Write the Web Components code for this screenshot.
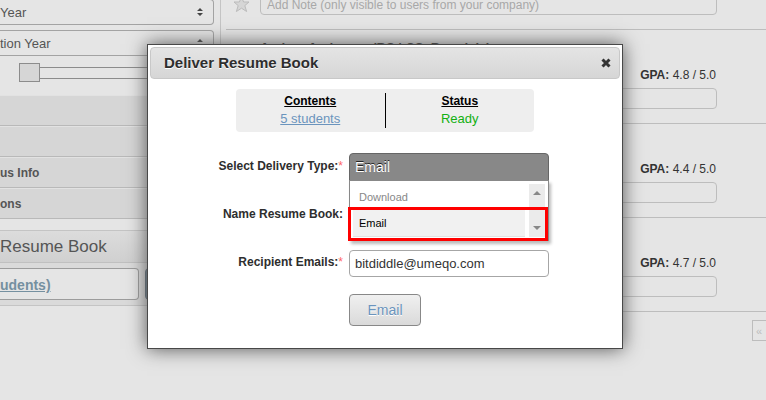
<!DOCTYPE html>
<html lang="en">
<head>
<meta charset="utf-8">
<title>Deliver Resume Book</title>
<style>
html{background:#e5e5e5}
body{margin:0;font:12px/16px "Liberation Sans",Arial,sans-serif;color:#333;overflow:hidden}
</style>
</head>
<body>
<resume-app></resume-app>
<script>
const define=(name,html)=>customElements.define(name,class extends HTMLElement{
  constructor(){
    super();
    const t=document.createElement('template');
    t.innerHTML='<style>*{box-sizing:border-box}</style>'+html;
    this.attachShadow({mode:'open'}).append(t.content.cloneNode(true));
  }
});

/* Drop-down of the filter column, running off the left side of the window */
customElements.define('filter-select',class extends HTMLElement{
  connectedCallback(){
    this.attachShadow({mode:'open'}).innerHTML=`<style>
    :host{display:grid;margin-right:6px}
    select,svg{grid-area:1/1}
    select{appearance:none;height:26px;width:100%;margin:0;padding:0;border:1px solid #a3a3a3;border-left:0;border-radius:0 4px 4px 0;background:transparent;color:#555;font:13px "Liberation Sans",Arial,sans-serif}
    svg{justify-self:end;align-self:center;margin-right:11px;pointer-events:none}
    </style><select aria-label="${this.getAttribute('label')}"><option>${this.getAttribute('value')}</option></select>
    <svg width="6" height="8" fill="#444"><path d="M0 3L3 0L6 3ZM0 5L3 8L6 5Z"/></svg>`;
  }
});

define('filter-slider',`<style>
:host{display:flex;padding:7px 5px 0 19px;height:39px}
div{display:grid;flex:1;align-self:start;align-items:center}
input,span{grid-area:1/1}
span{height:12px;border:1px solid #8c8c8c;margin-left:20px}
input{appearance:none;width:100%;height:19px;margin:0;background:none}
input::-webkit-slider-thumb{appearance:none;width:21px;height:19px;border:1px solid #8c8c8c;background:#d6d6d6}
</style><div><span></span><input type="range" value="0" aria-label="Minimum"></div>`);

define('accordion-header',`<style>
:host{display:block}
button{display:block;width:100%;height:31px;margin:0;padding:0;border:0;border-top:1px solid #e2e2e2;border-bottom:1px solid #b9b9b9;background:#d6d6d6;color:#555;text-align:left;font:bold 12px "Liberation Sans",Arial,sans-serif}
</style><button><slot></slot></button>`);

define('book-cart',`<style>
:host{display:block;margin-top:11px;border-top:1px solid #c4c4c4;border-bottom:1px solid #c4c4c4;background:#dadada}
h2{margin:0;height:32px;border-bottom:1px solid #c0c0c0;font-size:17px;line-height:31px;font-weight:normal;color:#555;background:linear-gradient(#dcdcdc,#d0d0d0)}
div{display:flex;gap:6px;padding:5px 0}
p{margin:0;width:139px;height:32px;border:1px solid #9c9c9c;border-left:0;border-radius:0 4px 4px 0;background:#e5e5e5;line-height:32px;font-size:14px;font-weight:bold}
a{color:#7590a0}
button{flex:1;border:1px solid #5f6f7c;border-radius:4px;background:#71828f}
</style><h2>Resume Book</h2><div><p><a href="#">udents)</a></p><button aria-label="Deliver"></button></div>`);

define('filter-sidebar',`<style>
:host{display:block;width:221px;border-right:1px solid #c4c4c4}
.s{display:grid;gap:5px;margin-top:-1px}
</style><div class="s"><filter-select label="Graduation year" value="Year"></filter-select>
<filter-select label="Second graduation year" value="tion Year"></filter-select></div>
<filter-slider></filter-slider>
<accordion-header></accordion-header><accordion-header></accordion-header>
<accordion-header>us Info</accordion-header><accordion-header>ons</accordion-header>
<book-cart></book-cart>`);

define('student-row',`<style>
:host{display:grid;height:94px;padding:11px 49px 0 34px;border-bottom:1px solid #bdbdbd;grid-template-rows:26px 16px 5px 21px;grid-template-columns:1fr auto}
::slotted(h3){grid-row:1;grid-column:1;margin:0;font-size:13px;line-height:13px;white-space:nowrap}
p{grid-row:2;grid-column:2;margin:0 1px 0 0}
input{grid-row:4;grid-column:1/3;width:100%;height:21px;border:1px solid #bdbdbd;border-radius:4px;background:none}
</style><slot name="name"></slot><p><b>GPA:</b> <slot></slot></p><input type="text" aria-label="Note">`);

define('student-list',`<style>
:host{display:block;flex:1;min-width:0;padding-left:5px}
.note{display:flex;align-items:flex-start;gap:10px;height:30px;padding:0 49px 0 7px;border-bottom:1px solid #bdbdbd}
svg{margin-top:-4px;width:17px;height:17px;flex:none}
input{flex:1;min-width:0;height:21px;margin-top:-6px;padding:0 6px;border:1px solid #bdbdbd;border-radius:4px;background:none;font:12px "Liberation Sans",Arial,sans-serif}
input::placeholder{color:#a8a8a8}
nav{display:flex;justify-content:flex-end;margin-top:8px;overflow:hidden}
a{width:14px;height:21px;border:1px solid #bdbdbd;border-right:0;padding-left:3px;font-size:11px;line-height:20px;color:#bdbdbd;text-decoration:none}
</style>
<div class="note"><svg viewBox="0 0 17 17"><path d="M8.5 1L10.6 6H16L11.8 9.6L13.6 15.5L8.5 12.2L3.4 15.5L5.2 9.6L1 6H6.4Z" fill="#d6d6d6" stroke="#bbb"/></svg>
<input type="text" placeholder="Add Note (only visible to users from your company)" aria-label="Add Note"></div>
<student-row><h3 slot="name">Andrea Anderson (BS | CS, Brandeis)</h3>4.8 / 5.0</student-row>
<student-row>4.4 / 5.0</student-row>
<student-row>4.7 / 5.0</student-row>
<nav><a href="#" aria-label="First">«</a></nav>`);

define('dialog-title',`<style>
:host{display:flex;align-items:center;justify-content:space-between;height:32px;padding:0 8px 0 13px;border:1px solid #c8c8c8;border-radius:4px;background:linear-gradient(#e4e4e4,#d6d6d6)}
h1{margin:0;font-size:15px;line-height:16px;color:#2e2e2e;text-shadow:0 1px #fff}
button{display:flex;border:0;background:none;padding:0}
</style><h1><slot></slot></h1><button aria-label="Close"><svg width="10" height="10"><path d="M1.5 1.5L8.5 8.5M8.5 1.5L1.5 8.5" stroke="#333" stroke-width="3"/></svg></button>`);

define('book-summary',`<style>
:host{display:flex;width:298px;margin:0 auto;padding:4px 0;border-radius:4px;background:#eee}
section{flex:1;text-align:center;padding-bottom:1px}
section+section{border-left:1px solid #000}
h2{margin:0;font-size:12px;line-height:17px;color:#000;text-decoration:underline}
div{font-size:13px;line-height:17px}
a{color:#6b94bd}
.r{color:#12b012}
</style><section><h2>Contents</h2><div><a href="#">5 students</a></div></section><section><h2>Status</h2><div class="r">Ready</div></section>`);

define('option-menu',`<style>
:host{display:flex;gap:4px;padding:3px;height:61px;border:1px solid #888;background:#fff;box-shadow:2px 3px 3px #bbb}
ul{flex:1;margin:0;padding:0;list-style:none;font-size:11px;color:#888}
li{line-height:26px;padding-left:6px}
li[aria-selected=true]{color:#000;background:#f1f1f1;border-bottom:1px solid #e2e2e2}
.bar{width:16px;display:flex;flex-direction:column;align-items:center;justify-content:space-between;padding:7px 0;background:#ebebeb}
.mark{position:absolute;left:-2px;right:0;bottom:-1px;height:34px;border:3px solid #f00}
</style><ul role="listbox"><li role="option">Download</li><li role="option" aria-selected="true">Email</li></ul>
<div class="bar"><svg width="8" height="4" fill="#888"><path d="M0 4L4 0L8 4Z"/></svg><svg width="8" height="4" fill="#888"><path d="M0 0L4 4L8 0Z"/></svg></div><div class="mark"></div>`);

define('delivery-form',`<style>
:host{display:block;margin-top:21px}
form{display:grid;grid-template-columns:193px 200px;column-gap:6px;grid-template-rows:repeat(3,48px) 29px}
label{justify-self:end;line-height:16px;margin-top:5px;font-weight:bold;color:#2e2e2e;white-space:nowrap}
i{font-style:normal;font-weight:normal;color:#f66}
.pick{position:relative;align-self:start}
select,input{display:block;width:100%;height:28px;margin:0;padding:0 5px;border-radius:4px;color:#333;font:13px "Liberation Sans",Arial,sans-serif}
select{appearance:none;border:1px solid #666;border-radius:4px 4px 0 0;background:#888;color:#fff;font-size:14px;text-shadow:0 -1px #222}
input{border:1px solid #a6a6a6;background:#fff}
.mail{margin-top:1px;height:27px}
option-menu{position:absolute;z-index:1;top:27px;left:0;right:0}
button{grid-column:2;width:72px;height:32px;margin-top:-3px;padding:0;border:1px solid #888;border-radius:4px;background:linear-gradient(#f0f0f0,#dadada);color:#6b94bd;font:14px "Liberation Sans",Arial,sans-serif;text-shadow:0 1px #fff}
</style><form>
<label for="type">Select Delivery Type:<i>*</i></label><div class="pick"><select id="type"><option>Email</option></select><option-menu></option-menu></div>
<label for="name">Name Resume Book:</label><input id="name" type="text">
<label for="mail">Recipient Emails:<i>*</i></label><input class="mail" id="mail" type="text" value="bitdiddle@umeqo.com">
<button type="button">Email</button></form>`);

define('deliver-dialog',`<style>
:host{display:block;padding:2px 2px 22px;border:1px solid #484848;background:#fff;box-shadow:0 0 18px #555}
book-summary{margin-top:10px}
</style><dialog-title>Deliver Resume Book</dialog-title><book-summary></book-summary><delivery-form></delivery-form>`);

define('resume-app',`<style>
:host{display:block}
main{display:flex;align-items:flex-start}
.over{position:absolute;top:44px;left:147px;right:143px}
</style><main><filter-sidebar></filter-sidebar><student-list></student-list></main><div class="over"><deliver-dialog></deliver-dialog></div>`);
</script>
</body>
</html>
